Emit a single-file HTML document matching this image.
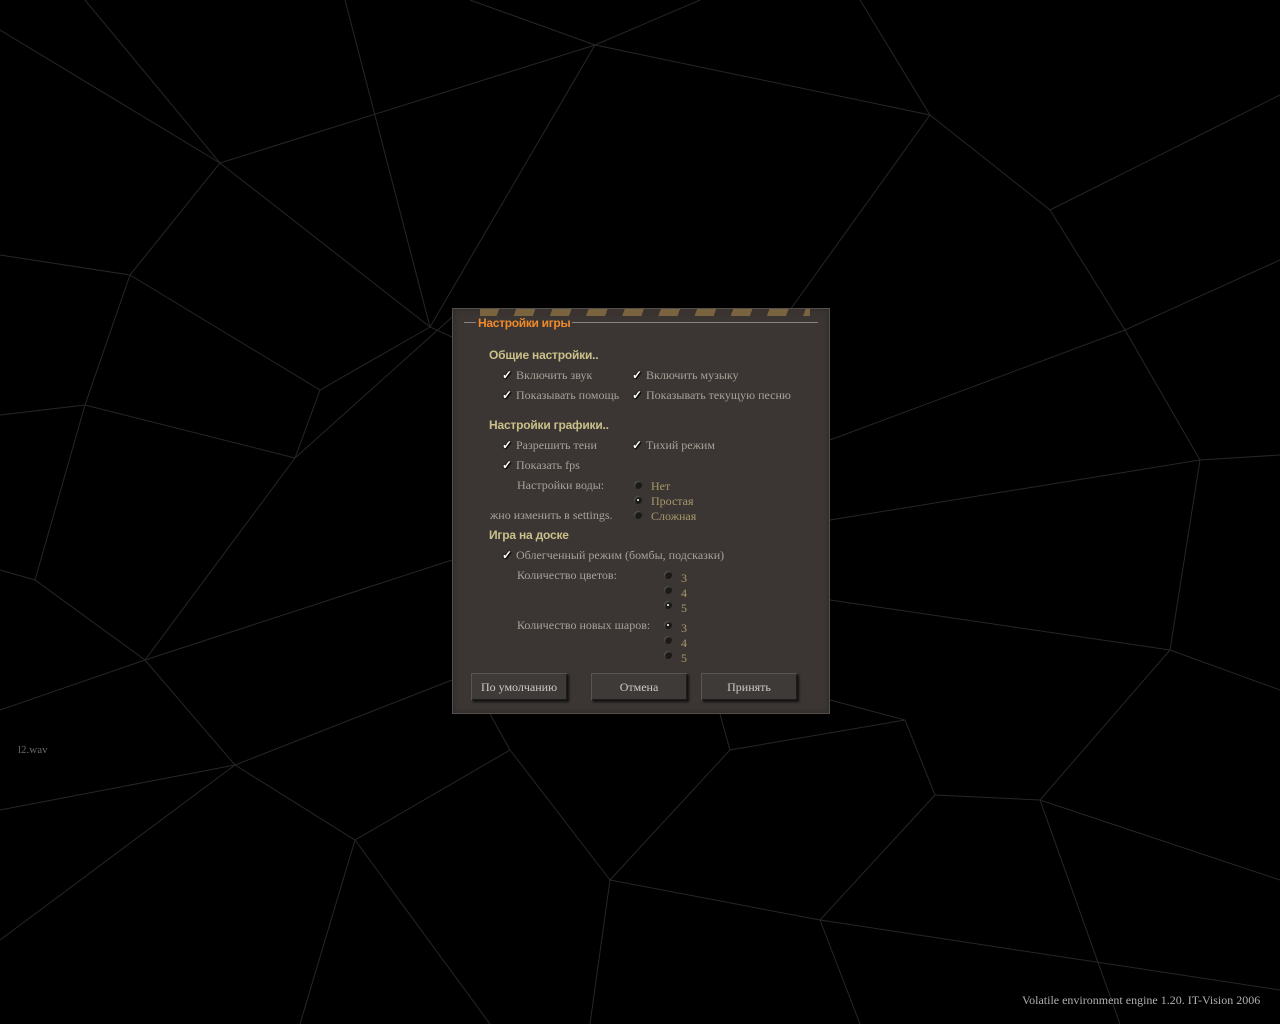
<!DOCTYPE html>
<html><head><meta charset="utf-8"><style>
html,body{margin:0;padding:0;background:#000;width:1280px;height:1024px;overflow:hidden;font-family:"Liberation Serif","DejaVu Serif",serif}
.a{position:absolute;white-space:nowrap}
#dlg{position:absolute;left:452px;top:308px;width:378px;height:406px;background:#3b3533;box-shadow:inset 0 0 0 1px #55504c,inset 0 0 6px #222;}
.h{color:#c9c08a;font-family:"Liberation Sans",sans-serif;font-weight:bold;font-size:12px;letter-spacing:-0.2px}
.t{color:#a8a29a;font-size:12px}
.n{color:#a79a6a;font-size:12px}
.ck{color:#fff;font-size:12px;font-weight:bold;text-shadow:0 0 2px #000,1px 1px 1px #000}
.r{position:absolute;width:8px;height:8px;border-radius:50%;background:#1c1a19;box-shadow:inset 1px 1px 1px #555}
.r.on::after{content:"";position:absolute;left:3px;top:3px;width:2px;height:2px;background:#fff;border-radius:50%}
.b{position:absolute;top:673px;height:27px;background:#3e3a38;box-shadow:inset 1px 1px 0 #5a5551,inset -1px -1px 0 #1e1c1b,2px 2px 2px #111;color:#cfcac2;font-size:12px;text-align:center;line-height:28px}
</style></head><body>
<svg class="a" style="left:0;top:0" width="1280" height="1024" stroke="#262626" stroke-width="1" fill="none">
<path d="M0 30 L220 163 L430 327 L830 510"/>
<path d="M85 0 L220 163 L130 275 L0 255"/>
<path d="M345 0 L430 327 L595 45 L930 115 L1050 210 L1280 95"/>
<path d="M595 45 L470 0 M595 45 L700 0 M930 115 L860 0"/>
<path d="M220 163 L595 45"/>
<path d="M130 275 L320 390 L430 327 M130 275 L85 405 L0 415"/>
<path d="M320 390 L295 458 L85 405 M295 458 L460 310"/>
<path d="M930 115 L790 310 M1050 210 L1125 330 L1280 260 M1125 330 L830 440 M1125 330 L1200 460 L1280 455"/>
<path d="M1200 460 L830 520 M1200 460 L1170 650 L1280 690 M1170 650 L830 600 M1170 650 L1040 800 L1280 880"/>
<path d="M1040 800 L935 795 L905 720 L830 700 M935 795 L820 920 L860 1024 M1040 800 L1120 1024"/>
<path d="M905 720 L730 750 L610 880 L510 750 L355 840 L235 765 L145 660 L35 580 L0 570"/>
<path d="M610 880 L820 920 M610 880 L590 1024 M355 840 L300 1024 M355 840 L490 1024"/>
<path d="M235 765 L0 810 M145 660 L0 710 M145 660 L295 458 M35 580 L85 405 M145 660 L452 560"/>
<path d="M510 750 L490 714 M730 750 L720 714 M235 765 L452 680"/>
<path d="M0 940 L235 765 M820 920 L1280 990"/>
</svg>
<div id="dlg"></div>
<div class="a" style="left:480px;top:309px;width:330px;height:7px;background:repeating-linear-gradient(110deg,#7a6440 0 18px,#3a3330 18px 34px)"></div>
<div class="a" style="left:464px;top:322px;width:354px;height:1px;background:#8a847c"></div>
<div class="a" style="left:476px;top:316px;color:#f08a2a;font-family:'Liberation Sans',sans-serif;font-weight:bold;font-size:12px;background:#3b3533;padding:0 2px;letter-spacing:-0.3px">Настройки игры</div>
<div class="a h" style="left:489px;top:348px">Общие настройки..</div>
<div class="a ck" style="left:502px;top:368px">✓</div><div class="a t" style="left:516px;top:368px">Включить звук</div>
<div class="a ck" style="left:632px;top:368px">✓</div><div class="a t" style="left:646px;top:368px">Включить музыку</div>
<div class="a ck" style="left:502px;top:388px">✓</div><div class="a t" style="left:516px;top:388px">Показывать помощь</div>
<div class="a ck" style="left:632px;top:388px">✓</div><div class="a t" style="left:646px;top:388px">Показывать текущую песню</div>
<div class="a h" style="left:489px;top:418px">Настройки графики..</div>
<div class="a ck" style="left:502px;top:438px">✓</div><div class="a t" style="left:516px;top:438px">Разрешить тени</div>
<div class="a ck" style="left:632px;top:438px">✓</div><div class="a t" style="left:646px;top:438px">Тихий режим</div>
<div class="a ck" style="left:502px;top:458px">✓</div><div class="a t" style="left:516px;top:458px">Показать fps</div>
<div class="a t" style="left:517px;top:478px">Настройки воды:</div>
<div class="r" style="left:634px;top:481px"></div><div class="a n" style="left:651px;top:479px">Нет</div>
<div class="r on" style="left:634px;top:496px"></div><div class="a n" style="left:651px;top:494px">Простая</div>
<div class="a t" style="left:490px;top:508px">жно изменить в settings.</div>
<div class="r" style="left:634px;top:511px"></div><div class="a n" style="left:651px;top:509px">Сложная</div>
<div class="a h" style="left:489px;top:528px">Игра на доске</div>
<div class="a ck" style="left:502px;top:548px">✓</div><div class="a t" style="left:516px;top:548px">Облегченный режим (бомбы, подсказки)</div>
<div class="a t" style="left:517px;top:568px">Количество цветов:</div>
<div class="r" style="left:664px;top:571px"></div><div class="a n" style="left:681px;top:571px">3</div>
<div class="r" style="left:664px;top:586px"></div><div class="a n" style="left:681px;top:586px">4</div>
<div class="r on" style="left:664px;top:601px"></div><div class="a n" style="left:681px;top:601px">5</div>
<div class="a t" style="left:517px;top:618px">Количество новых шаров:</div>
<div class="r on" style="left:664px;top:621px"></div><div class="a n" style="left:681px;top:621px">3</div>
<div class="r" style="left:664px;top:636px"></div><div class="a n" style="left:681px;top:636px">4</div>
<div class="r" style="left:664px;top:651px"></div><div class="a n" style="left:681px;top:651px">5</div>
<div class="b" style="left:471px;width:96px">По умолчанию</div>
<div class="b" style="left:591px;width:96px">Отмена</div>
<div class="b" style="left:701px;width:96px">Принять</div>
<div class="a" style="left:18px;top:744px;color:#6a6a6a;font-size:11px">l2.wav</div>
<div class="a" style="left:1022px;top:993px;color:#b0b0b0;font-size:12px">Volatile environment engine 1.20. IT-Vision 2006</div>
</body></html>
